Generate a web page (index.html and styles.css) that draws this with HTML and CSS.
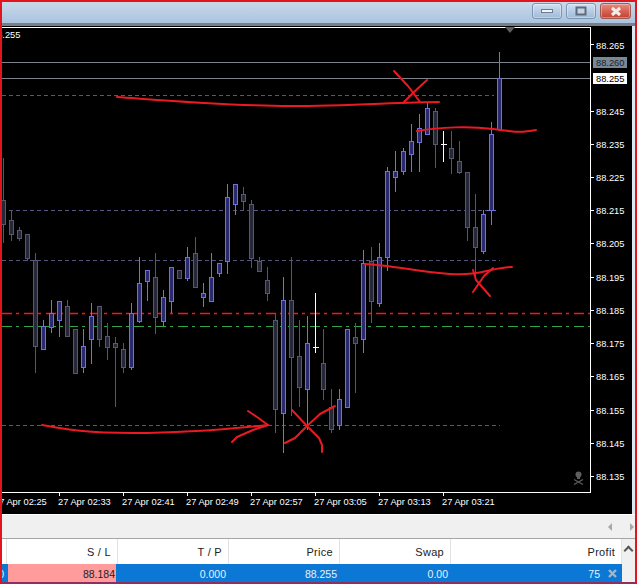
FILE: index.html
```html
<!DOCTYPE html>
<html lang="en">
<head>
    <meta charset="UTF-8">
    <title>USDJPY,M1</title>
    <link rel="stylesheet" href="styles.css">
</head>
<body>
    <div class="window">
        <div class="titlebar">
            <div class="win-btn">
                <svg width="14" height="6" viewBox="0 0 14 6"><rect class="glyph" x="1.5" y="1.5" width="11" height="3"/></svg>
            </div>
            <div class="win-btn">
                <svg width="12" height="10" viewBox="0 0 12 10"><rect class="glyph-max" x="1.5" y="1.5" width="9" height="7"/></svg>
            </div>
            <div class="win-btn close">
                <svg width="14" height="11" viewBox="0 0 14 11"><path class="glyph-x" d="M3 2l8 7M11 2l-8 7"/></svg>
            </div>
        </div>

        <div class="chart">
            <!-- viewBox uses page coordinates, so the plot lines up with the window -->
            <svg class="plot" width="630" height="488" viewBox="2 26 630 488">
                <path class="frame" d="M2 27.5H590.5V492.5H2"/>
                <path class="ticks" d="M591 44.5h3M591 111.5h3M591 144.5h3M591 177.5h3M591 210.5h3M591 243.5h3M591 277.5h3M591 310.5h3M591 343.5h3M591 376.5h3M591 410.5h3M591 443.5h3M591 476.5h3"/>
                <path class="ticks" d="M59.5 493v3M123.5 493v3M187.5 493v3M251.5 493v3M315.5 493v3M379.5 493v3M443.5 493v3"/>
                <path class="shift" d="M505 27h10l-5 6z"/>

                <!-- levels -->
                <path class="level" d="M2 95.5H494M2 210.5H496M2 260.5H500M2 425.5H500"/>
                <path class="price-line" d="M2 62.5H590"/>
                <path class="price-line" d="M2 78.5H590"/>
                <path class="stop-line" d="M2 313.5H590"/>
                <path class="take-line" d="M2 326.5H590"/>

                <!-- falling candles -->
                <path class="wick bear" d="M3.5 158V243M11.5 210V241M19.5 227V241M27.5 234V261M35.5 253V373M67.5 300V336M75.5 329V373M99.5 306V347M107.5 323V360M115.5 337V407M123.5 343V373M155.5 253V334M179.5 270V278M195.5 237V287M243.5 187V211M251.5 200V268M259.5 257V271M267.5 267V301M275.5 313V433M291.5 257V416M299.5 320V407M323.5 329V400M331.5 389V433M355.5 323V393M371.5 247V323M435.5 108V168M451.5 131V174M459.5 141V174M467.5 172V241M475.5 194V280"/>
                <path class="body bear" d="M1.5 200.5h4v24h-4zM9.5 220.5h4v14h-4zM17.5 230.5h4v8h-4zM25.5 234.5h4v24h-4zM33.5 260.5h4v86h-4zM65.5 306.5h4v30h-4zM73.5 329.5h4v44h-4zM97.5 306.5h4v33h-4zM105.5 336.5h4v11h-4zM113.5 343.5h4v4h-4zM121.5 349.5h4v18h-4zM153.5 277.5h4v40h-4zM177.5 270.5h4v8h-4zM193.5 253.5h4v34h-4zM241.5 194.5h4v7h-4zM249.5 204.5h4v54h-4zM257.5 261.5h4v10h-4zM265.5 280.5h4v13h-4zM273.5 320.5h4v89h-4zM289.5 300.5h4v57h-4zM297.5 356.5h4v31h-4zM321.5 363.5h4v26h-4zM329.5 407.5h4v22h-4zM353.5 337.5h4v6h-4zM369.5 261.5h4v40h-4zM433.5 111.5h4v33h-4zM449.5 148.5h4v10h-4zM457.5 161.5h4v11h-4zM465.5 172.5h4v55h-4zM473.5 227.5h4v20h-4z"/>

                <!-- rising candles -->
                <path class="wick bull" d="M43.5 320V349M51.5 300V333M59.5 301V337M83.5 329V373M91.5 303V364M131.5 303V370M139.5 257V323M147.5 270V301M163.5 290V326M171.5 267V313M187.5 247V281M203.5 283V307M211.5 253V301M219.5 263V277M227.5 184V274M235.5 184V215M283.5 277V453M307.5 316V430M339.5 389V430M347.5 329V407M363.5 250V353M379.5 243V307M387.5 167V271M395.5 151V192M403.5 148V175M411.5 124V172M419.5 114V172M427.5 102V134M483.5 210V254M491.5 122V225M487 210.5h9M499.5 52V129"/>
                <path class="body bull" d="M41.5 326.5h4v23h-4zM49.5 313.5h4v14h-4zM57.5 301.5h4v19h-4zM81.5 346.5h4v21h-4zM89.5 316.5h4v23h-4zM129.5 313.5h4v54h-4zM137.5 283.5h4v38h-4zM145.5 270.5h4v11h-4zM161.5 297.5h4v24h-4zM169.5 267.5h4v34h-4zM185.5 257.5h4v21h-4zM201.5 293.5h4v4h-4zM209.5 277.5h4v24h-4zM217.5 263.5h4v10h-4zM225.5 197.5h4v64h-4zM233.5 184.5h4v20h-4zM281.5 300.5h4v113h-4zM305.5 343.5h4v46h-4zM337.5 399.5h4v26h-4zM345.5 329.5h4v78h-4zM361.5 263.5h4v76h-4zM377.5 257.5h4v46h-4zM385.5 171.5h4v86h-4zM393.5 171.5h4v6h-4zM401.5 151.5h4v20h-4zM409.5 141.5h4v13h-4zM417.5 128.5h4v14h-4zM425.5 108.5h4v26h-4zM481.5 214.5h4v37h-4zM489.5 134.5h4v76h-4zM497.5 78.5h4v51h-4z"/>

                <!-- the two unchanged candles are white -->
                <path class="doji" d="M315.5 293V353M313 347.5h6M443.5 131V162M441 144.5h6"/>

                <!-- hand drawn marks -->
                <path class="ink" d="M117 97C160 100 230 106 290 106S400 102 439 102"/>
                <path class="ink" d="M394 71L408 86L420 102M427 80L413 93L403 103"/>
                <path class="ink" d="M417 131C440 127 470 126 493 129S520 133 536 130"/>
                <path class="ink" d="M365 264C390 265 420 272 450 274S490 268 512 267"/>
                <path class="ink" d="M473 270L476 280L490 296M493 268L484 276L473 292"/>
                <path class="ink" d="M42 425C60 428 80 433 133 433S230 429 268 425"/>
                <path class="ink" d="M248 411L257 417L268 425L253 430L237 437L232 442"/>
                <path class="ink" d="M292 410L307 426L319 438L322 445L322 452M335 406L320 414L307 426L295 438L285 443"/>

                <!-- skull -->
                <g class="skull">
                    <circle cx="578.5" cy="474.5" r="3"/>
                    <rect x="577" y="476" width="3" height="3"/>
                    <path class="bones" d="M574 479.5L583 484.5M583 479.5L574 484.5"/>
                </g>

                <!-- price scale -->
                <text class="label" x="-8" y="38">88.255</text>
                <text class="label" x="596" y="49">88.265</text>
                <rect class="tag-ask" x="593" y="57" width="34" height="11"/>
                <text class="label dark" x="596" y="66">88.260</text>
                <rect class="tag-bid" x="593" y="73" width="34" height="11"/>
                <text class="label black" x="596" y="82">88.255</text>
                <text class="label" x="596" y="115">88.245</text>
                <text class="label" x="596" y="148">88.235</text>
                <text class="label" x="596" y="181">88.225</text>
                <text class="label" x="596" y="214">88.215</text>
                <text class="label" x="596" y="247">88.205</text>
                <text class="label" x="596" y="281">88.195</text>
                <text class="label" x="596" y="314">88.185</text>
                <text class="label" x="596" y="347">88.175</text>
                <text class="label" x="596" y="380">88.165</text>
                <text class="label" x="596" y="414">88.155</text>
                <text class="label" x="596" y="447">88.145</text>
                <text class="label" x="596" y="480">88.135</text>

                <!-- time scale -->
                <text class="label" x="-6" y="505">27 Apr 02:25</text>
                <text class="label" x="58" y="505">27 Apr 02:33</text>
                <text class="label" x="122" y="505">27 Apr 02:41</text>
                <text class="label" x="186" y="505">27 Apr 02:49</text>
                <text class="label" x="250" y="505">27 Apr 02:57</text>
                <text class="label" x="314" y="505">27 Apr 03:05</text>
                <text class="label" x="378" y="505">27 Apr 03:13</text>
                <text class="label" x="442" y="505">27 Apr 03:21</text>
            </svg>
        </div>

        <div class="tabs-bar">
            <span class="arrow-left"></span>
            <span class="arrow-right"></span>
        </div>

        <div class="trade-table">
            <div class="th"></div>
            <div class="th">S / L</div>
            <div class="th">T / P</div>
            <div class="th">Price</div>
            <div class="th">Swap</div>
            <div class="th">Profit</div>
            <div class="scroll-col"><span class="chevron"></span></div>

            <div class="td">0.00</div>
            <div class="td stop">88.184</div>
            <div class="td">0.000</div>
            <div class="td">88.255</div>
            <div class="td">0.00</div>
            <div class="td profit">
                <span>75</span>
                <svg class="close-trade" width="11" height="11" viewBox="0 0 11 11"><path d="M2 2l7 7M9 2l-7 7"/></svg>
            </div>
        </div>
    </div>
</body>
</html>
```

FILE: styles.css
```css
* {
    box-sizing: border-box;
}
body {
    margin: 0;
    background: #000;
    font-family: "Liberation Sans", Arial, sans-serif;
}
.window {
    width: 637px;
    height: 584px;
    display: flex;
    flex-direction: column;
    overflow: hidden;
    border: 2px solid #e2141c;
    border-bottom-color: #8e2f5e;
    background: #f0f0f0;
}

/* title bar */
.titlebar {
    height: 24px;
    flex: none;
    display: flex;
    justify-content: flex-end;
    align-items: flex-start;
    gap: 4px;
    padding: 1px 4px 0 0;
    background: linear-gradient(#c9d9ea, #a9c3df);
    border-bottom: 3px solid #7b7f85;
}
.win-btn {
    width: 30px;
    height: 16px;
    display: flex;
    align-items: center;
    justify-content: center;
    border: 1px solid #7f95ae;
    border-radius: 3px;
    background: linear-gradient(#cfe0f1, #9fbad8);
    box-shadow: inset 0 0 0 1px rgba(255, 255, 255, 0.35);
}
.win-btn.close {
    width: 31px;
    border-color: #9c5a52;
    background: linear-gradient(#e9897d, #c23f2f);
}
.glyph {
    fill: #f2f5f8;
    stroke: #6d7c8c;
}
.glyph-max {
    fill: #c5d3e2;
    stroke: #5c6b7b;
    stroke-width: 2;
}
.glyph-x {
    fill: none;
    stroke: #f4ece6;
    stroke-width: 3;
}

/* chart */
.chart {
    flex: none;
    display: flex;
    height: 489px;
    padding-right: 3px;
    background: #dde7f1;
    border-bottom: 1px solid #fff;
}
.plot {
    display: block;
    background: #000;
}
.plot path {
    fill: none;
}
.frame,
.ticks {
    stroke: #fff;
    shape-rendering: crispEdges;
}
.plot .shift {
    fill: #5f5f5f;
}
.level {
    stroke: #55557f;
    stroke-dasharray: 4 3;
    shape-rendering: crispEdges;
}
.price-line {
    stroke: #7e838b;
    shape-rendering: crispEdges;
}
.stop-line {
    stroke: #ff1414;
    stroke-width: 1.6;
    stroke-dasharray: 10 4 3 5;
}
.take-line {
    stroke: #2fa84a;
    stroke-dasharray: 10 4 3 5;
    shape-rendering: crispEdges;
}
.wick,
.body,
.doji {
    shape-rendering: crispEdges;
}
.wick.bull {
    stroke: #7272e4;
}
.wick.bear {
    stroke: #56566e;
}
.plot .body.bull {
    stroke: #7070e0;
    fill: #2a2a72;
}
.plot .body.bear {
    stroke: #58586c;
    fill: #27273a;
}
.doji {
    stroke: #fff;
}
.ink {
    stroke: #ea1a22;
    stroke-width: 2;
    stroke-linecap: round;
    stroke-linejoin: round;
}
.skull {
    fill: #5e5e5e;
}
.plot .bones {
    stroke: #5e5e5e;
    stroke-width: 1.3;
}
.label {
    font-size: 9.3px;
    fill: #fff;
}
.label.dark {
    fill: #222;
}
.label.black {
    fill: #000;
}
.tag-ask {
    fill: #778899;
}
.tag-bid {
    fill: #fff;
}

/* scroll strip under the chart */
.tabs-bar {
    height: 23px;
    flex: none;
    display: flex;
    align-items: center;
    justify-content: flex-end;
    gap: 18px;
    padding-right: 1px;
    background: #f0f0f0;
}
.arrow-left,
.arrow-right {
    width: 0;
    height: 0;
    border-top: 4px solid transparent;
    border-bottom: 4px solid transparent;
}
.arrow-left {
    border-right: 4px solid #a8a8a8;
}
.arrow-right {
    border-left: 4px solid #a8a8a8;
}

/* trade table */
.trade-table {
    flex: none;
    display: grid;
    grid-template-columns: 5px 111px 111px 111px 111px 171px 13px;
    grid-template-rows: 25px 19px;
    border-top: 1px solid #a6a6a6;
    background: #fff;
    font-size: 11px;
}
.th {
    display: flex;
    align-items: center;
    justify-content: flex-end;
    padding-right: 6px;
    border-right: 1px solid #e2e2e2;
    letter-spacing: 0.3px;
    color: #222;
}
.th:first-child {
    padding: 0;
}
.td {
    display: flex;
    align-items: center;
    justify-content: flex-end;
    overflow: hidden;
    padding-right: 3px;
    background: #0a78d4;
    color: #e8f2fb;
    font-size: 10.5px;
    white-space: nowrap;
}
.td.stop {
    background: linear-gradient(to right, #0a78d4 1px, #ff9b9b 1px, #ff9b9b 109px, #0a78d4 109px);
    color: #222;
}
.td.profit {
    gap: 7px;
    padding-right: 4px;
}
.close-trade path {
    fill: none;
    stroke: #9db8d4;
    stroke-width: 2.4;
}
.scroll-col {
    grid-column: 7;
    grid-row: 1 / span 2;
    display: flex;
    justify-content: center;
    padding-top: 8px;
    background: #f0f0f0;
}
.chevron {
    width: 7px;
    height: 7px;
    border-top: 2px solid #555;
    border-left: 2px solid #555;
    transform: rotate(45deg);
}
```
